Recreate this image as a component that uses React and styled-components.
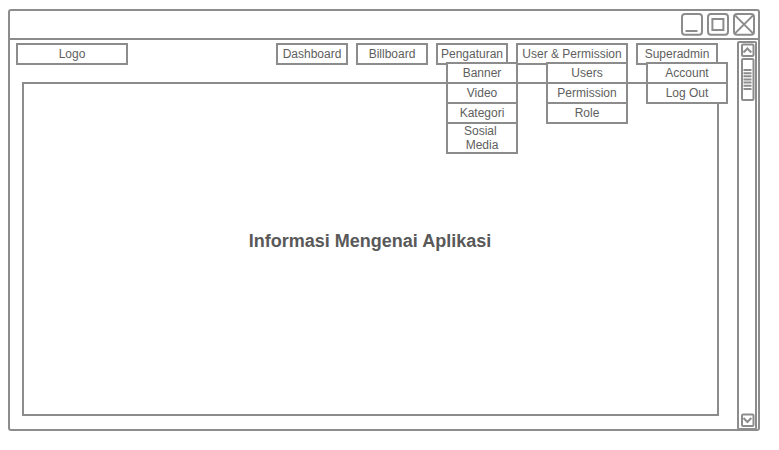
import React from "react";
import styled, { createGlobalStyle } from "styled-components";

const LINE = "#8c8c8c";

const GlobalStyle = createGlobalStyle`
  *, *::before, *::after { box-sizing: border-box; }
  body {
    margin: 0;
    background: #fff;
    color: #5e5e5e;
    font: 12px/14px "Liberation Sans", Arial, sans-serif;
  }
`;

const Page = styled.div`
  width: 779px;
  height: 450px;
  padding: 9px 19px 19px 8px;
`;

const Window = styled.div`
  display: flex;
  flex-direction: column;
  width: 752px;
  height: 422px;
  border: 2px solid ${LINE};
  border-radius: 3px;
`;

const TitleBar = styled.header`
  display: flex;
  flex: none;
  justify-content: flex-end;
  gap: 2px;
  height: 29px;
  padding: 1px 2px 0 0;
  border-bottom: 2px solid ${LINE};
`;

const Icon = styled.svg`
  display: block;
  flex: none;
  fill: none;
  stroke: ${LINE};
  stroke-width: 2;
`;

const Body = styled.div`
  display: flex;
  flex: 1;
  min-height: 0;
`;

const Main = styled.main`
  display: flex;
  flex: none;
  flex-direction: column;
  width: 727px;
  padding: 3px 0 13px 6px;
`;

const Nav = styled.nav`
  display: flex;
  gap: 8px;
  height: 22px;
`;

const NavItem = styled.div`
  position: relative;
  display: flex;
  flex: none;
  align-items: center;
  justify-content: center;
  width: ${(p) => p.$width}px;
  margin-right: ${(p) => p.$gapAfter || 0}px;
  border: 2px solid ${LINE};
  white-space: nowrap;
`;

const Menu = styled.ul`
  position: absolute;
  z-index: 1;
  top: 17px;
  left: ${(p) => p.$left}px;
  width: ${(p) => p.$width}px;
  margin: 0;
  padding: 0;
  border: 2px solid ${LINE};
  border-bottom: 0;
  background: #fff;
  list-style: none;
`;

const MenuItem = styled.li`
  height: ${(p) => (p.$tall ? 30 : 20)}px;
  padding-top: ${(p) => (p.$tall ? 0 : 2)}px;
  border-bottom: 2px solid ${LINE};
  text-align: center;
  white-space: pre;
`;

const Content = styled.section`
  display: flex;
  flex: none;
  align-items: center;
  justify-content: center;
  width: 697px;
  height: 334px;
  margin: 17px 0 0 6px;
  padding: 0 1px 17px 0;
  border: 2px solid ${LINE};
`;

const Heading = styled.h1`
  margin: 0;
  color: #595959;
  font-size: 18px;
  line-height: 22px;
`;

const ScrollBar = styled.aside`
  display: flex;
  flex: none;
  flex-direction: column;
  width: 20px;
  height: 389px;
  margin-top: 1px;
  padding: 0 0 1px 2px;
  border: 2px solid ${LINE};
  border-radius: 2px;
`;

const BottomArrow = styled(Icon)`
  margin-top: auto;
`;

const menus = [
  { label: "Dashboard", width: 72 },
  { label: "Billboard", width: 72 },
  { label: "Pengaturan", width: 72, left: 8, menuWidth: 72, items: ["Banner", "Video", "Kategori", "Sosial\u00a0\nMedia"] },
  { label: "User & Permission", width: 112, left: 28, menuWidth: 82, items: ["Users", "Permission", "Role"] },
  { label: "Superadmin", width: 82, left: 8, menuWidth: 82, items: ["Account", "Log Out"] },
];

function ControlIcon({ children }) {
  return (
    <Icon width="24" height="24" viewBox="0 0 24 24">
      <rect x="2" y="2" width="20" height="20.7" rx="3" />
      {children}
    </Icon>
  );
}

export default function App() {
  return (
    <>
      <GlobalStyle />
      <Page>
        <Window>
          <TitleBar>
            <ControlIcon><path d="M5.5 19h12" /></ControlIcon>
            <ControlIcon><rect x="6.4" y="7" width="11" height="11" /></ControlIcon>
            <ControlIcon><path d="m2.3 2.6 19.5 19.5m0-19.5-19.5 19.5" /></ControlIcon>
          </TitleBar>
          <Body>
            <Main>
              <Nav>
                <NavItem $width={112} $gapAfter={140}>Logo</NavItem>
                {menus.map((m) => (
                  <NavItem key={m.label} $width={m.width}>
                    {m.label}
                    {m.items && (
                      <Menu $width={m.menuWidth} $left={m.left}>
                        {m.items.map((item) => (
                          <MenuItem key={item} $tall={item.includes("\n")}>
                            {item}
                          </MenuItem>
                        ))}
                      </Menu>
                    )}
                  </NavItem>
                ))}
              </Nav>
              <Content>
                <Heading>Informasi Mengenai Aplikasi</Heading>
              </Content>
            </Main>
            <ScrollBar>
              <Icon width="14" height="14" viewBox="0 0 14 14">
                <rect x="1" y="1.5" width="11.5" height="11.5" rx="1" />
                <path d="M2.5 9.5l3.9-4 3.9 4" />
              </Icon>
              <Icon width="14" height="45" viewBox="0 0 14 45">
                <rect x="1" y="2" width="11.5" height="41" rx="1" />
                <path d="M2.5 13h8m-8 3.15h8m-8 3.15h8m-8 3.15h8m-8 3.15h8m-8 3.15h8m-8 3.15h8" />
              </Icon>
              <BottomArrow width="14" height="14" viewBox="0 0 14 14">
                <rect x="1" y="1.5" width="11.5" height="11.5" rx="1" />
                <path d="M2.5 5l3.9 4 3.9-4" />
              </BottomArrow>
            </ScrollBar>
          </Body>
        </Window>
      </Page>
    </>
  );
}
